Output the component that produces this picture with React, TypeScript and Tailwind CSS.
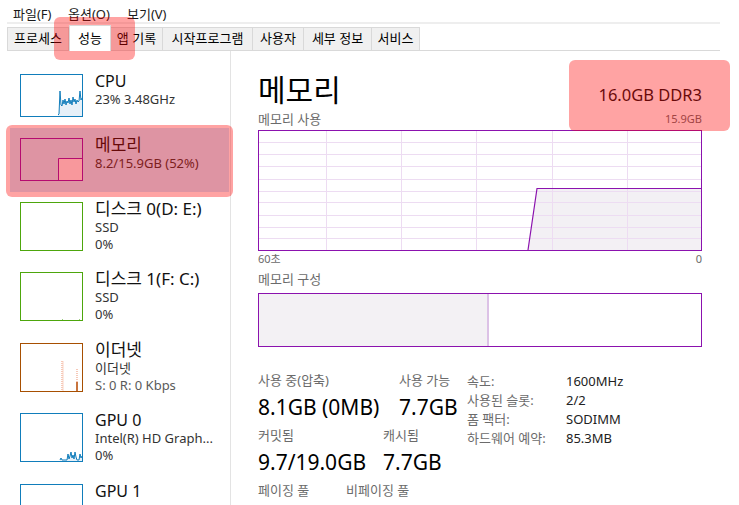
import React from "react";

const PURPLE = "#8b12ae";

function Thumb({ color, h, children }: { color: string; h: number; children?: React.ReactNode }) {
  return (
    <svg width={63} height={h} viewBox={`0 0 63 ${h}`} className="block shrink-0">
      {children}
      <rect x={0.5} y={0.5} width={62} height={h - 1} fill="none" stroke={color} strokeWidth={1} />
    </svg>
  );
}

function CpuThumb() {
  const pts =
    "38,41 39,40 40,17 41,31 42,32 43,26 44,30 45,25 46,31 47,27 48,29 49,24 50,30 51,26 52,31 53,23 54,28 55,25 56,30 57,26 58,28 59,27 60,17 61,26 62,24";
  return (
    <Thumb color="#117dbb" h={43}>
      <polygon points={`38,42 ${pts} 62,42`} fill="#e6f0f8" />
      <polyline points={pts} fill="none" stroke="#117dbb" strokeWidth={1} />
    </Thumb>
  );
}

function MemThumb() {
  return (
    <Thumb color={PURPLE} h={43}>
      <rect x={38} y={20} width={25} height={23} fill="#f4eef4" />
      <polyline points="38.5,43 38.5,20.5 63,20.5" fill="none" stroke={PURPLE} strokeWidth={1} />
    </Thumb>
  );
}

function DiskThumb({ dots }: { dots?: boolean }) {
  return (
    <Thumb color="#4da60c" h={49}>
      {dots && (
        <>
          <rect x={42} y={47} width={1} height={1} fill="#9ccc80" />
          <rect x={59} y={47} width={1} height={1} fill="#9ccc80" />
        </>
      )}
    </Thumb>
  );
}

function EthThumb() {
  return (
    <Thumb color="#a74f01" h={49}>
      <line x1={42} y1={18} x2={42} y2={48} stroke="#f0a68a" strokeWidth={1.2} strokeDasharray="1 1" />
      <line x1={43} y1={18} x2={43} y2={48} stroke="#f7c9b6" strokeWidth={0.8} />
      <line x1={57} y1={26} x2={57} y2={48} stroke="#f0a68a" strokeWidth={1.2} strokeDasharray="1 1" />
      <rect x={56} y={39} width={2} height={9} fill="#c8743e" />
    </Thumb>
  );
}

function GpuThumb({ h }: { h: number }) {
  const pts = "40,47 41,45 42,47 47,47 48,41 49,46 50,43 51,39 52,45 53,42 54,46 55,39 56,44 57,47 59,47 60,41 61,45 62,43";
  return (
    <Thumb color="#117dbb" h={h}>
      {h > 40 && (
        <>
          <polygon points={`40,48 ${pts} 62,48`} fill="#e6f0f8" />
          <polyline points={pts} fill="none" stroke="#117dbb" strokeWidth={1} />
        </>
      )}
    </Thumb>
  );
}

function Item({
  h,
  thumb,
  title,
  lines,
  selected,
  ko,
}: {
  h: number;
  thumb: React.ReactNode;
  title: string;
  lines: { t: string; c?: string }[];
  selected?: boolean;
  ko?: boolean;
}) {
  return (
    <div className={`flex w-[219px] pt-[10px] pl-[10px] ${selected ? "bg-[#cce8ff]" : ""}`} style={{ height: h }}>
      {thumb}
      <div className="ml-[12px] -mt-[3px] flex flex-col">
        <div className={`${ko ? "text-[17px]" : "text-[16px]"} leading-[20px] text-[#111] whitespace-nowrap`}>{title}</div>
        {lines.map((l, i) => (
          <div key={i} className={`text-[13px] leading-[17px] whitespace-nowrap ${l.c ?? "text-[#333]"}`}>
            {l.t}
          </div>
        ))}
      </div>
    </div>
  );
}

const tabs = [
  { t: "프로세스", w: 62 },
  { t: "성능", w: 42, sel: true },
  { t: "앱 기록", w: 52 },
  { t: "시작프로그램", w: 90 },
  { t: "사용자", w: 51 },
  { t: "세부 정보", w: 68 },
  { t: "서비스", w: 48 },
];

function Stat({ label, value, w }: { label: string; value: string; w?: string }) {
  return (
    <div className={`flex flex-col ${w ?? ""}`}>
      <div className="text-[13px] leading-[17px] text-[#6b6b6b] whitespace-nowrap">{label}</div>
      <div className="mt-[4px] text-[21px] leading-[28px] text-black whitespace-nowrap">{value}</div>
    </div>
  );
}

export default function App() {
  return (
    <div className="relative w-[739px] h-[505px] overflow-hidden bg-white text-black font-['Noto_Sans','Noto_Sans_CJK_KR',sans-serif]">
      {/* menu bar */}
      <div className="flex h-[22px] items-end pl-[13px] text-[13px] leading-[16px] text-[#1a1a1a]">
        <span className="w-[55px]">파일(F)</span>
        <span className="w-[59px]">옵션(O)</span>
        <span>보기(V)</span>
      </div>
      <div className="mx-[7px] w-[713px] h-[2px] bg-[#eeeeee]" />
      {/* tabs */}
      <div className="mx-[7px] w-[713px] h-[27px] flex items-end border-b border-[#d9d9d9]">
        {tabs.map((t, i) =>
          t.sel ? (
            <div
              key={i}
              className="relative z-10 -mb-px h-[26px] bg-white border-x border-t border-[#d9d9d9] flex items-center justify-center text-[13px] text-black"
              style={{ width: t.w }}
            >
              {t.t}
            </div>
          ) : (
            <div
              key={i}
              className={`h-[23px] bg-[#f0f0f0] border-t border-r border-[#d9d9d9] flex items-center justify-center text-[13px] text-black ${
                i === 0 ? "border-l" : ""
              }`}
              style={{ width: t.w }}
            >
              {t.t}
            </div>
          )
        )}
      </div>

      {/* main */}
      <div className="flex">
        {/* left panel */}
        <div className="w-[231px] h-[460px] border-r border-[#e3e3e3] pt-[13px] pl-[10px] shrink-0">
          <Item h={64} thumb={<CpuThumb />} title="CPU" lines={[{ t: "23% 3.48GHz" }]} />
          <Item h={64} thumb={<MemThumb />} title="메모리" ko lines={[{ t: "8.2/15.9GB (52%)" }]} selected />
          <Item h={70} thumb={<DiskThumb />} title="디스크 0(D: E:)" ko lines={[{ t: "SSD" }, { t: "0%" }]} />
          <Item h={71} thumb={<DiskThumb dots />} title="디스크 1(F: C:)" ko lines={[{ t: "SSD" }, { t: "0%" }]} />
          <Item
            h={70}
            thumb={<EthThumb />}
            title="이더넷"
            ko
            lines={[{ t: "이더넷" }, { t: "S: 0 R: 0 Kbps", c: "text-[#5a5a5a]" }]}
          />
          <Item h={71} thumb={<GpuThumb h={49} />} title="GPU 0" lines={[{ t: "Intel(R) HD Graph..." }, { t: "0%" }]} />
          <Item h={60} thumb={<GpuThumb h={49} />} title="GPU 1" lines={[{ t: "NVIDIA GeForce ..." }, { t: "0%" }]} />
        </div>

        {/* right panel */}
        <div className="pl-[27px] pt-[21px] flex flex-col">
          <div className="w-[444px] flex justify-between items-baseline">
            <div className="text-[30px] leading-[36px] text-black">메모리</div>
            <div className="text-[16.5px] leading-[24px] text-[#111]">16.0GB DDR3</div>
          </div>
          <div className="w-[444px] flex justify-between items-center h-[22px]">
            <div className="text-[13px] leading-[16px] text-[#6b6b6b]">메모리 사용</div>
            <div className="text-[11px] leading-[16px] text-[#6b6b6b]">15.9GB</div>
          </div>
          {/* usage graph */}
          <svg width={444} height={121} viewBox="0 0 444 121" className="block">
            <polygon points="270,121 279,58.5 444,58.5 444,121" fill="#f3f0f4" />
            {[12, 24, 36, 49, 61, 72, 85, 97, 108].map((y) => (
              <line key={y} x1={1} x2={443} y1={y + 0.5} y2={y + 0.5} stroke="#eddcf2" strokeWidth={1} />
            ))}
            {[68, 143, 218, 294, 369].map((x) => (
              <line key={x} x1={x + 0.5} x2={x + 0.5} y1={1} y2={120} stroke="#eddcf2" strokeWidth={1} />
            ))}
            <polyline points="270,120 279,58.5 444,58.5" fill="none" stroke={PURPLE} strokeWidth={1.2} />
            <rect x={0.5} y={0.5} width={443} height={120} fill="none" stroke={PURPLE} strokeWidth={1} />
          </svg>
          <div className="w-[444px] flex justify-between text-[11px] leading-[15px] text-[#6b6b6b]">
            <span>60초</span>
            <span>0</span>
          </div>
          <div className="mt-[5px] text-[13px] leading-[16px] text-[#6b6b6b]">메모리 구성</div>
          <svg width={444} height={54} viewBox="0 0 444 54" className="block mt-[6px]">
            <rect x={0} y={0} width={229} height={54} fill="#f3f1f4" />
            <rect x={229} y={0} width={2} height={54} fill="#dcc2e6" />
            <rect x={0.5} y={0.5} width={443} height={53} fill="none" stroke={PURPLE} strokeWidth={1} />
          </svg>

          {/* stats */}
          <div className="mt-[25px] flex">
            <div className="w-[209px] flex flex-col">
              <div className="flex">
                <Stat label="사용 중(압축)" value="8.1GB (0MB)" w="w-[141px]" />
                <Stat label="사용 가능" value="7.7GB" />
              </div>
              <div className="flex mt-[6px]">
                <Stat label="커밋됨" value="9.7/19.0GB" w="w-[125px]" />
                <Stat label="캐시됨" value="7.7GB" />
              </div>
              <div className="flex mt-[6px]">
                <div className="w-[88px] text-[13px] leading-[17px] text-[#6b6b6b] whitespace-nowrap">페이징 풀</div>
                <div className="text-[13px] leading-[17px] text-[#6b6b6b] whitespace-nowrap">비페이징 풀</div>
              </div>
            </div>
            <div className="flex flex-col text-[13px] leading-[19px]">
              {[
                ["속도:", "1600MHz"],
                ["사용된 슬롯:", "2/2"],
                ["폼 팩터:", "SODIMM"],
                ["하드웨어 예약:", "85.3MB"],
              ].map(([k, v]) => (
                <div key={k} className="flex">
                  <div className="w-[99px] text-[#6b6b6b] whitespace-nowrap">{k}</div>
                  <div className="text-[#222]">{v}</div>
                </div>
              ))}
            </div>
          </div>
        </div>
      </div>

      {/* highlight overlays */}
      <div className="absolute left-[54px] top-[17px] w-[81px] h-[43px] rounded-[6px] bg-[rgba(255,0,0,0.36)]" />
      <div className="absolute left-[6px] top-[125px] w-[227px] h-[72px] rounded-[6px] bg-[rgba(255,0,0,0.36)]" />
      <div className="absolute left-[569px] top-[60px] w-[161px] h-[71px] rounded-[6px] bg-[rgba(255,0,0,0.36)]" />
    </div>
  );
}
